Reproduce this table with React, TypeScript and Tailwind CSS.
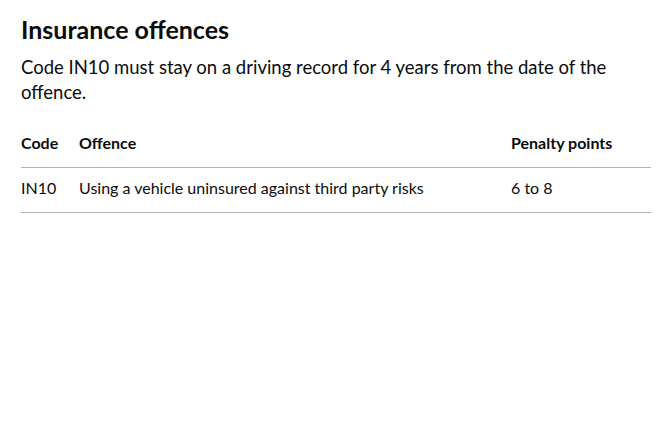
export default function App() {
  return (
    <div className="w-[660px] h-[440px] bg-white text-[#0b0c0c] px-[21px] pt-[13px]" style={{ fontFamily: "Lato, 'Noto Sans', sans-serif" }}>
      <h2 className="text-[25px] leading-[32px] font-bold mb-[10px]">Insurance offences</h2>
      <p className="text-[18.5px] leading-[25px] mb-[18px] w-[630px]">
        Code IN10 must stay on a driving record for 4 years from the date of the offence.
      </p>
      <table className="w-[630px] border-collapse text-[16px]">
        <thead>
          <tr className="border-b border-[#b1b4b6]">
            <th className="text-left font-bold pt-[8px] pb-[12px] pr-[20px] leading-[24px] w-[58px]">Code</th>
            <th className="text-left font-bold pt-[8px] pb-[12px] pr-[20px] leading-[24px] w-[432px]">Offence</th>
            <th className="text-left font-bold pt-[8px] pb-[12px] leading-[24px]">Penalty points</th>
          </tr>
        </thead>
        <tbody>
          <tr className="border-b border-[#b1b4b6]">
            <td className="pt-[8px] pb-[12px] pr-[20px] leading-[24px]">IN10</td>
            <td className="pt-[8px] pb-[12px] pr-[20px] leading-[24px]">Using a vehicle uninsured against third party risks</td>
            <td className="pt-[8px] pb-[12px] leading-[24px]">6 to 8</td>
          </tr>
        </tbody>
      </table>
    </div>
  );
}
